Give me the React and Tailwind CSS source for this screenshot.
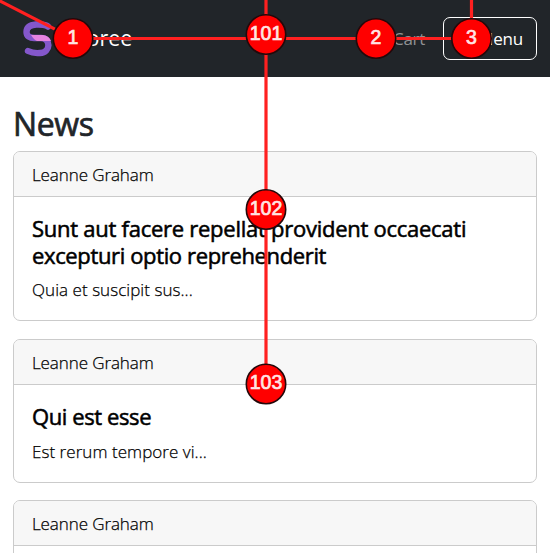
const posts = [
  {
    author: "Leanne Graham",
    title: [
      { text: "Sunt aut facere repellat provident occaecati", cls: "tracking-[-0.26px]" },
      { text: "excepturi optio reprehenderit", cls: "tracking-[-0.36px]" },
    ],
    body: "Quia et suscipit sus...",
    height: "h-[170px]",
  },
  {
    author: "Leanne Graham",
    title: [{ text: "Qui est esse", cls: "tracking-[-0.4px]" }],
    body: "Est rerum tempore vi...",
    height: "h-[144px]",
  },
  {
    author: "Leanne Graham",
    title: [],
    body: "",
    height: "h-[144px]",
  },
];

const markers = [
  { label: "1", x: 73, y: 38.5 },
  { label: "2", x: 376, y: 38.5 },
  { label: "3", x: 471.5, y: 38.5 },
  { label: "101", x: 266, y: 34.5 },
  { label: "102", x: 266, y: 209.5 },
  { label: "103", x: 266, y: 384 },
];

function Logo() {
  return (
    <svg width="32" height="36" viewBox="0 0 32 36" fill="none" strokeLinecap="round">
      <path d="M25 5.500 C22 3 3.500 1 3.500 11 C3.500 15.500 7 17 11 17 H18 C28 17 28 31.500 17 32 C12 32.500 9 32 5 30" stroke="#8457cb" strokeWidth="6.400" />
      <path d="M8 14 H20 Q26.500 15 28 20 H14 Q11 19 8 14Z" fill="#e583e0" />
    </svg>
  );
}

function Card({ post }) {
  return (
    <article className={`${post.height} shrink-0 overflow-hidden rounded-[7px] border border-[#cbcbcb] bg-white`}>
      <div className="h-[45px] border-b border-[#cbcbcb] bg-[#f7f7f7] px-[18px] pt-[9px] text-[17px] font-light leading-[27px] tracking-[-0.1px] [-webkit-text-stroke:0.25px_#000]">
        {post.author}
      </div>
      <div className="px-[18px] pt-[18px]">
        <h5 className="mb-[8px] text-[22px] font-normal leading-[26.500px] [-webkit-text-stroke:0.55px_#000]">
          {post.title.map((line) => (
            <span key={line.text} className={`block whitespace-nowrap ${line.cls}`}>{line.text}</span>
          ))}
        </h5>
        <p className="text-[17px] font-light leading-[27px] tracking-[0.05px] [-webkit-text-stroke:0.25px_#000]">{post.body}</p>
      </div>
    </article>
  );
}

export default function App() {
  return (
    <div className="relative h-[553px] w-[550px] overflow-hidden bg-white font-['Open_Sans',sans-serif] text-black">
      <nav className="flex h-[77px] items-center bg-[#212529] pl-[23px] pr-[13px] text-white">
        <Logo />
        <span className="mb-[2px] ml-[12px] text-[21.5px] leading-[30px]">Storee</span>
        <span className="ml-auto mr-[18px] text-[17px] tracking-[-0.3px] text-[#909294]">Cart</span>
        <button className="h-[43px] w-[94px] rounded-[7px] border border-white pr-[13px] text-right text-[17px] tracking-[-0.2px]">Menu</button>
      </nav>
      <main className="px-[13px] pt-[26px]">
        <h1 className="mb-[7px] text-[32px] font-normal leading-[41px] tracking-[-0.4px] text-[#212529] [-webkit-text-stroke:0.7px_#212529]">News</h1>
        <div className="flex flex-col">
          <Card post={posts[0]} />
          <div className="h-[18px]" />
          <Card post={posts[1]} />
          <div className="h-[17px]" />
          <Card post={posts[2]} />
        </div>
      </main>
      <svg className="absolute inset-0" width="550" height="553">
        <g stroke="#ff2020" strokeWidth="3.200" fill="none">
          <path d="M-2 0 L73 38.500 H471.500 V0" />
          <path d="M266 0 V384" />
        </g>
        {markers.map((m) => (
          <g key={m.label}>
            <circle cx={m.x} cy={m.y} r="19.700" fill="#ff0000" stroke="#24080a" strokeWidth="1.600" />
            <text x={m.x} y={m.y + 5} textAnchor="middle" fill="#ffe5e5" stroke="#ffe5e5" strokeWidth="0.700" className="font-['Liberation_Sans',sans-serif] text-[19.5px]">
              {m.label}
            </text>
          </g>
        ))}
      </svg>
    </div>
  );
}
